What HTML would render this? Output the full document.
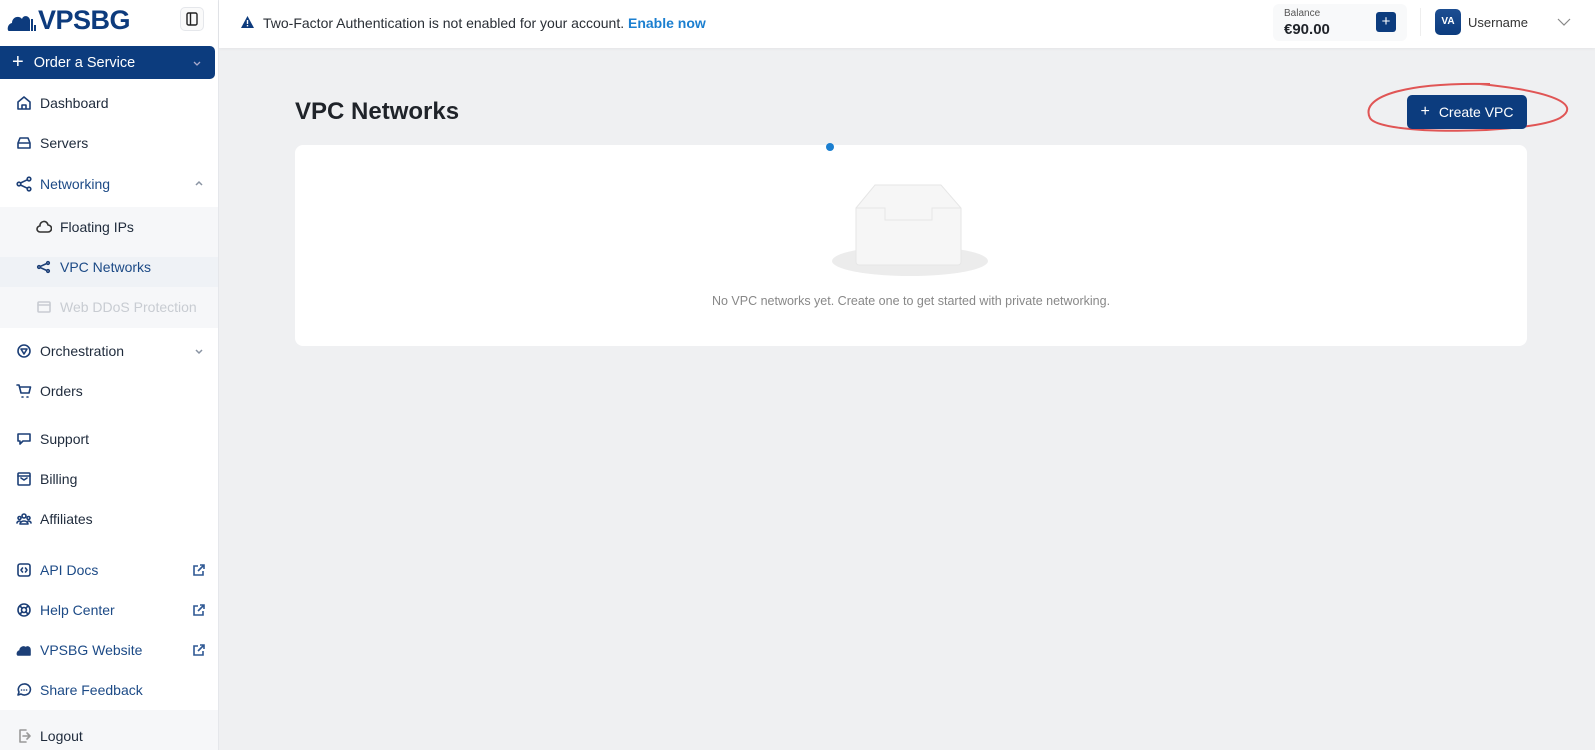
<!DOCTYPE html>
<html><head><meta charset="utf-8"><style>
*{box-sizing:border-box;margin:0;padding:0}
body{width:1595px;height:750px;overflow:hidden;background:#eff0f2;font-family:"Liberation Sans",sans-serif;position:relative;color:#1f2937}
.abs{position:absolute}
#side{left:0;top:0;width:219px;height:750px;background:#fff;border-right:1px solid #e5e7eb}
.nav{position:absolute;left:16px;font-size:14px;color:#1e2a3b;display:flex;align-items:center;gap:8px;height:20px}
.nav svg{width:16px;height:16px;fill:none;stroke:#1c3f77;stroke-width:1.6;stroke-linecap:round;stroke-linejoin:round}
.ext{position:absolute;left:192px;width:13px;height:13px;fill:none;stroke:#2f5894;stroke-width:1.6}
.chev{position:absolute;left:194px;width:10px;height:10px;fill:none;stroke:#8a94a3;stroke-width:1.5}
</style></head><body>
<div id="side" class="abs">
  <div class="abs" style="left:6px;top:5px;font-size:27px;font-weight:bold;color:#0d3b7d;letter-spacing:-0.5px;display:flex;align-items:center">
    <svg width="32" height="24" viewBox="0 0 30 24"><path d="M2 22 C0 22 0 15 5 14 C5 8 12 6 15 10 C16 6 22 6 23 11 L23 22Z" fill="#0d3b7d"/><rect x="24" y="10" width="2" height="12" fill="#0d3b7d"/><rect x="27" y="16" width="2" height="6" fill="#0d3b7d"/></svg><span>VPSBG</span></div>
  <div class="abs" style="left:180px;top:7px;width:24px;height:24px;border:1px solid #e5e7eb;border-radius:5px;background:#fafafa">
    <svg width="22" height="22" viewBox="0 0 22 22"><rect x="6" y="5" width="10" height="12" rx="1.5" fill="none" stroke="#222" stroke-width="1.4"/><line x1="9.5" y1="5" x2="9.5" y2="17" stroke="#222" stroke-width="1.4"/></svg></div>
  <div class="abs" style="left:0;top:46px;width:215px;height:33px;background:#0c3c7e;border-radius:0 5px 5px 0;color:#fff;font-size:14.5px;display:flex;align-items:center;padding-left:12px">
    <span style="font-size:20px;margin-right:10px;font-weight:300">+</span>Order a Service
    <svg class="abs" style="left:192px;top:12px" width="10" height="10" viewBox="0 0 10 10"><path d="M2 4l3 3 3-3" fill="none" stroke="#aac" stroke-width="1.3"/></svg></div>
  <div class="nav" style="top:93px"><svg viewBox="0 0 16 16"><path d="M2 7l6-5 6 5v7H2z M6 14v-4h4v4"/></svg>Dashboard</div>
  <div class="nav" style="top:133px"><svg viewBox="0 0 16 16"><path d="M2 8l2-5h8l2 5v5H2z M2 8h12"/></svg>Servers</div>
  <div class="nav" style="top:174px;color:#1c4a86"><svg viewBox="0 0 16 16"><circle cx="3" cy="8" r="1.8"/><circle cx="13" cy="3" r="1.8"/><circle cx="13" cy="13" r="1.8"/><path d="M4.5 7l7-3.3M4.5 9l7 3.3"/></svg>Networking</div>
  <svg class="chev" style="top:179px" viewBox="0 0 10 10"><path d="M2 6l3-3 3 3"/></svg>
  <div class="abs" style="left:0;top:207px;width:218px;height:121px;background:#f6f7f9"></div>
  <div class="abs" style="left:0;top:257px;width:218px;height:30px;background:#eff2f6"></div>
  <div class="nav" style="top:217px;left:36px"><svg viewBox="0 0 16 16" style="stroke:#333"><path d="M4 13a3 3 0 010-6 4 4 0 018-1 3 3 0 010 7z"/></svg>Floating IPs</div>
  <div class="nav" style="top:257px;left:36px;color:#1c4a86"><svg viewBox="0 0 16 16"><circle cx="3" cy="8" r="1.3"/><circle cx="12" cy="4" r="1.3"/><circle cx="12" cy="12" r="1.3"/><path d="M4.5 7.3L10.5 4.6M4.5 8.7l6 2.7"/></svg>VPC Networks</div>
  <div class="nav" style="top:297px;left:36px;color:#c8ccd2"><svg viewBox="0 0 16 16" style="stroke:#c8ccd2"><rect x="2" y="3" width="12" height="10" rx="1"/><path d="M2 6h12"/></svg>Web DDoS Protection</div>
  <div class="nav" style="top:341px"><svg viewBox="0 0 16 16"><circle cx="8" cy="8" r="6"/><path d="M5 6l3 5 3-5z"/></svg>Orchestration</div>
  <svg class="chev" style="top:346px" viewBox="0 0 10 10"><path d="M2 4l3 3 3-3"/></svg>
  <div class="nav" style="top:381px"><svg viewBox="0 0 16 16"><path d="M1 2h2l2 8h8l1.5-6H4 M6 14h1M11 14h1"/></svg>Orders</div>
  <div class="nav" style="top:429px"><svg viewBox="0 0 16 16"><path d="M2 3h12v7H7l-3 3v-3H2z"/></svg>Support</div>
  <div class="nav" style="top:469px"><svg viewBox="0 0 16 16"><rect x="2" y="2" width="12" height="12" rx="1"/><path d="M2 5h12M5 7l3 2 3-2"/></svg>Billing</div>
  <div class="nav" style="top:509px"><svg viewBox="0 0 16 16"><circle cx="8" cy="5" r="2"/><circle cx="3.5" cy="7" r="1.5"/><circle cx="12.5" cy="7" r="1.5"/><path d="M4 13a4 3 0 018 0z M1 12a3 2 0 013-2M15 12a3 2 0 00-3-2"/></svg>Affiliates</div>
  <div class="nav" style="top:560px;color:#1c4a86"><svg viewBox="0 0 16 16"><rect x="2" y="2" width="12" height="12" rx="2"/><path d="M6.5 6L5 8l1.5 2M9.5 6L11 8l-1.5 2"/></svg>API Docs</div>
  <svg class="ext" style="top:564px" viewBox="0 0 13 13"><path d="M6 2H2v9h9V7M8 1h4v4M12 1L6 7"/></svg>
  <div class="nav" style="top:600px;color:#1c4a86"><svg viewBox="0 0 16 16"><circle cx="8" cy="8" r="6"/><circle cx="8" cy="8" r="2.5"/><path d="M4 4l2.3 2.3M12 4L9.7 6.3M4 12l2.3-2.3M12 12L9.7 9.7"/></svg>Help Center</div>
  <svg class="ext" style="top:604px" viewBox="0 0 13 13"><path d="M6 2H2v9h9V7M8 1h4v4M12 1L6 7"/></svg>
  <div class="nav" style="top:640px;color:#1c4a86"><svg viewBox="0 0 16 16"><path d="M2 13c-1 0-1-4 2-4 0-4 4-5 6-3 1-2 4-1 4 2v5z" fill="#1c3f77"/></svg>VPSBG Website</div>
  <svg class="ext" style="top:644px" viewBox="0 0 13 13"><path d="M6 2H2v9h9V7M8 1h4v4M12 1L6 7"/></svg>
  <div class="nav" style="top:680px;color:#1c4a86"><svg viewBox="0 0 16 16"><path d="M8 2a6 5.5 0 11-3 10l-3 1 1-3A6 5.5 0 018 2z M5.5 8h.1M8 8h.1M10.5 8h.1"/></svg>Share Feedback</div>
  <div class="abs" style="left:0;top:710px;width:218px;height:40px;background:#f6f7f9"></div>
  <div class="nav" style="top:726px"><svg viewBox="0 0 16 16" style="stroke:#999"><path d="M10 2H4v12h6M7 8h7M11 5l3 3-3 3"/></svg>Logout</div>
</div>
<div class="abs" style="left:219px;top:0;width:1376px;height:48px;background:#fff;box-shadow:0 1px 3px rgba(0,0,0,.05)"></div>
<svg class="abs" style="left:240px;top:15px" width="15" height="14" viewBox="0 0 15 14"><path d="M7.5 1L14 13H1z" fill="#0d3b7d"/><rect x="6.8" y="5" width="1.4" height="4" fill="#fff"/><rect x="6.8" y="10" width="1.4" height="1.4" fill="#fff"/></svg>
<div class="abs" style="left:263px;top:15px;font-size:14px;color:#2a2f36">Two-Factor Authentication is not enabled for your account. <b style="color:#1b7fd0">Enable now</b></div>
<div class="abs" style="left:1273px;top:4px;width:134px;height:37px;background:#f8f9fa;border-radius:6px"></div>
<div class="abs" style="left:1284px;top:8px;font-size:10px;color:#555">Balance</div>
<div class="abs" style="left:1284px;top:21px;font-size:15px;font-weight:bold;color:#1f2329">€90.00</div>
<div class="abs" style="left:1376px;top:12px;width:20px;height:20px;background:#0c3c7e;border-radius:3px;color:#fff;text-align:center;line-height:19px;font-size:15px">+</div>
<div class="abs" style="left:1420px;top:8px;width:1px;height:28px;background:#eee"></div>
<div class="abs" style="left:1435px;top:9px;width:26px;height:26px;background:linear-gradient(#1d4e92,#0c3c7e);border-radius:5px;color:#fff;font-size:10px;font-weight:bold;text-align:center;line-height:26px">VA</div>
<div class="abs" style="left:1468px;top:15px;font-size:13px;color:#333">Username</div>
<svg class="abs" style="left:1557px;top:17px" width="14" height="10" viewBox="0 0 14 10"><path d="M1 2l6 6 6-6" fill="none" stroke="#888" stroke-width="1.2"/></svg>
<div class="abs" style="left:295px;top:98px;font-size:24px;font-weight:bold;color:#1f2329">VPC Networks</div>
<svg class="abs" style="left:1360px;top:78px" width="220" height="60" viewBox="0 0 220 60"><path d="M130 6 C40 4 0 20 10 40 C20 58 170 56 200 40 C220 28 200 14 120 6" fill="none" stroke="#e05555" stroke-width="2"/></svg>
<div class="abs" style="left:1407px;top:95px;width:120px;height:34px;background:#0c3c7e;border-radius:5px;color:#fff;font-size:14px;display:flex;align-items:center;justify-content:center"><span style="margin-right:9px;font-size:16px">+</span>Create VPC</div>
<div class="abs" style="left:295px;top:145px;width:1232px;height:201px;background:#fff;border-radius:8px"></div>
<div class="abs" style="left:826px;top:143px;width:8px;height:8px;background:#1b7fd0;border-radius:50%"></div>
<svg class="abs" style="left:830px;top:178px" width="160" height="100" viewBox="0 0 160 100"><ellipse cx="80" cy="83" rx="78" ry="15" fill="#ececec"/><path d="M26 30 L45 7 H111 L131 30 V84 a3 3 0 01-3 3 H29 a3 3 0 01-3-3z" fill="#f6f6f6" stroke="#e6e6e6"/><path d="M26 30 H55 V42 H102 V30 H131" fill="none" stroke="#e6e6e6"/></svg>
<div class="abs" style="left:295px;top:294px;width:1232px;text-align:center;font-size:12.5px;color:#888">No VPC networks yet. Create one to get started with private networking.</div>
</body></html>
